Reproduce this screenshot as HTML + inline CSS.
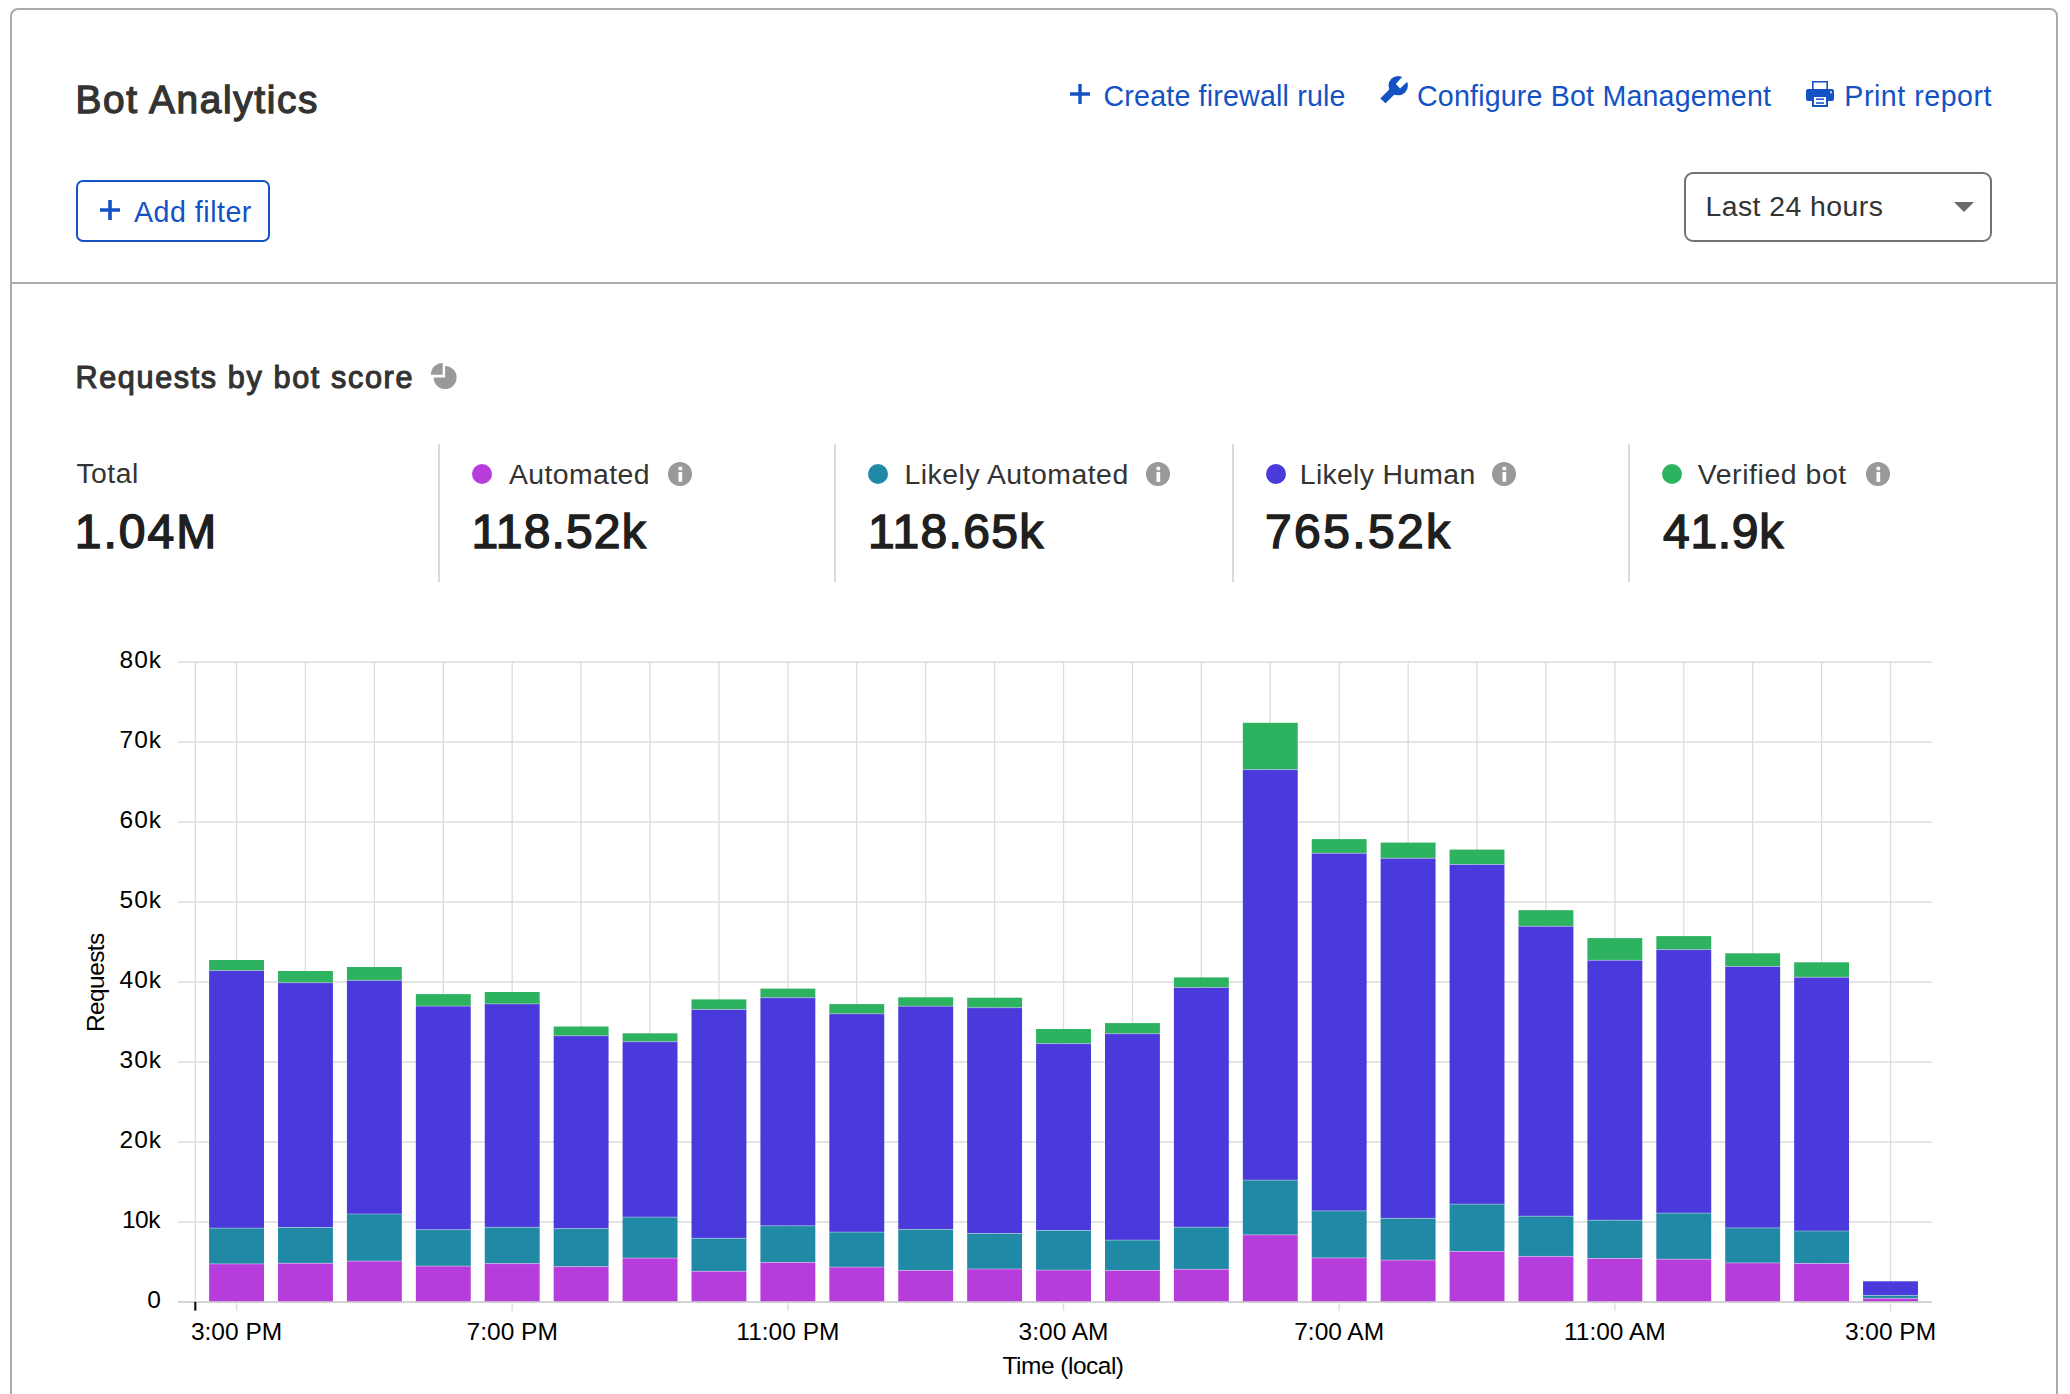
<!DOCTYPE html>
<html><head><meta charset="utf-8"><title>Bot Analytics</title>
<style>
*{box-sizing:border-box;margin:0;padding:0}
html,body{width:2070px;height:1394px;overflow:hidden;background:#fff}
body{position:relative;font-family:"Liberation Sans",sans-serif;color:#333}
.abs{position:absolute;white-space:nowrap;line-height:1}
.card{position:absolute;left:10px;top:8px;width:2048px;height:1500px;border:2px solid #aaa;border-radius:8px}
.divh{position:absolute;left:12px;top:282px;width:2044px;height:2px;background:#aaa}
.link{color:#1452c4;font-size:28.6px}
.lbl{font-size:28.4px;color:#333}
.val{font-size:48px;color:#1f1f1f;-webkit-text-stroke:1.5px #1f1f1f}
.vdiv{position:absolute;top:444px;width:2px;height:138px;background:#dadada}
.dot{position:absolute;width:20px;height:20px;border-radius:50%;top:464px}
.info{display:block}
svg text.t{font-family:"Liberation Sans",sans-serif;font-size:24.5px;fill:#000}
.g{stroke:#dcdcdc;stroke-width:1.3}
.ax{stroke:#c6c6c6;stroke-width:1.6}
</style></head><body>
<div class="card"></div>
<div class="divh"></div>

<div class="abs" style="left:75.50px;top:81.45px;font-size:38.8px;color:#333;-webkit-text-stroke:1.3px #333;letter-spacing:1.653px">Bot Analytics</div>

<svg class="abs" style="left:1068px;top:82px" width="24" height="24" viewBox="0 0 24 24"><path d="M12 2v20M2 12h20" stroke="#1452c4" stroke-width="3.4"/></svg>
<div class="abs link" style="left:1103.50px;top:81.80px;letter-spacing:0.191px">Create firewall rule</div>

<svg class="abs" style="left:1378px;top:74px" width="32" height="32" viewBox="0 0 32 32"><circle cx="20.2" cy="11.6" r="9.7" fill="#1452c4"/><path d="M2.3 24.5 L12.2 14.6 L17.4 19.4 L7.5 29.3Z" fill="#1452c4"/><path d="M17.8 9.9 L22.1 14.5 L31.3 5.8 L25.9 1.0 Z" fill="#fff"/></svg>
<div class="abs link" style="left:1417.00px;top:81.80px;letter-spacing:0.185px">Configure Bot Management</div>

<svg class="abs" style="left:1805px;top:80px" width="30" height="28" viewBox="0 0 30 28"><path fill="#1452c4" fill-rule="evenodd" d="M7 1h16v8h-1.6V2.6H8.6V9H7z M3 9h24a2 2 0 0 1 2 2v8a2 2 0 0 1-2 2h-4v6H7v-6H3a2 2 0 0 1-2-2v-8a2 2 0 0 1 2-2z M9 17v8h12v-8z M25 11.2h2v2h-2z"/><rect x="11" y="18.4" width="8" height="1.5" fill="#1452c4"/><rect x="11" y="22.3" width="8" height="1.5" fill="#1452c4"/><rect x="25" y="11.2" width="2" height="2" fill="#9ec0f0"/></svg>
<div class="abs link" style="left:1844.30px;top:82.15px;letter-spacing:0.521px">Print report</div>

<div class="abs" style="left:76px;top:180px;width:194px;height:62px;border:2px solid #1452c4;border-radius:7px"></div>
<svg class="abs" style="left:99px;top:199px" width="22" height="22" viewBox="0 0 22 22"><path d="M11 1v20M1 11h20" stroke="#1452c4" stroke-width="3.6"/></svg>
<div class="abs link" style="left:134.00px;top:197.50px;letter-spacing:0.505px">Add filter</div>

<div class="abs" style="left:1684px;top:172px;width:308px;height:70px;border:2px solid #737373;border-radius:9px"></div>
<div class="abs lbl" style="left:1705.50px;top:192.05px;letter-spacing:0.449px">Last 24 hours</div>
<svg class="abs" style="left:1953px;top:201px" width="22" height="12" viewBox="0 0 22 12"><path d="M1 1h20L11 11z" fill="#6a6a6a"/></svg>

<div class="abs" style="left:75.50px;top:361.85px;font-size:30.6px;color:#333;-webkit-text-stroke:1.1px #333;letter-spacing:1.625px">Requests by bot score</div>
<svg class="abs" style="left:430px;top:362px" width="28" height="28" viewBox="0 0 28 28"><path d="M15.1 4.0 A11.5 11.5 0 1 1 3.6 15.5 L15.1 15.5 Z" fill="#999"/><path d="M12.7 0.9 L12.7 12.7 L0.9 12.7 A11.8 11.8 0 0 1 12.7 0.9 Z" fill="#999"/></svg>

<div class="abs lbl" style="left:76.45px;top:459.05px;letter-spacing:0.455px">Total</div>
<div class="abs val" style="left:74.80px;top:507.90px;letter-spacing:2.000px">1.04M</div>

<div class="vdiv" style="left:438px"></div>
<div class="dot" style="left:472px;background:#b63ddc"></div>
<div class="abs lbl" style="left:509.00px;top:459.75px;letter-spacing:0.407px">Automated</div>
<div style="position:absolute;left:668px;top:462px"><svg class="info" width="24" height="24" viewBox="0 0 24 24"><circle cx="12" cy="12" r="12" fill="#999"/><rect x="10.5" y="4.8" width="3.7" height="3.4" rx="0.8" fill="#fff"/><rect x="10.5" y="10.1" width="3.7" height="9.7" fill="#fff"/></svg></div>
<div class="abs val" style="left:471.50px;top:507.90px;letter-spacing:1.164px">118.52k</div>

<div class="vdiv" style="left:834px"></div>
<div class="dot" style="left:868px;background:#208aa6"></div>
<div class="abs lbl" style="left:904.50px;top:460.45px;letter-spacing:0.499px">Likely Automated</div>
<div style="position:absolute;left:1146px;top:462px"><svg class="info" width="24" height="24" viewBox="0 0 24 24"><circle cx="12" cy="12" r="12" fill="#999"/><rect x="10.5" y="4.8" width="3.7" height="3.4" rx="0.8" fill="#fff"/><rect x="10.5" y="10.1" width="3.7" height="9.7" fill="#fff"/></svg></div>
<div class="abs val" style="left:868.00px;top:507.90px;letter-spacing:1.330px">118.65k</div>

<div class="vdiv" style="left:1232px"></div>
<div class="dot" style="left:1266px;background:#4b3adb"></div>
<div class="abs lbl" style="left:1299.80px;top:460.45px;letter-spacing:0.309px">Likely Human</div>
<div style="position:absolute;left:1492px;top:462px"><svg class="info" width="24" height="24" viewBox="0 0 24 24"><circle cx="12" cy="12" r="12" fill="#999"/><rect x="10.5" y="4.8" width="3.7" height="3.4" rx="0.8" fill="#fff"/><rect x="10.5" y="10.1" width="3.7" height="9.7" fill="#fff"/></svg></div>
<div class="abs val" style="left:1265.00px;top:507.90px;letter-spacing:2.370px">765.52k</div>

<div class="vdiv" style="left:1628px"></div>
<div class="dot" style="left:1662px;background:#2db35f"></div>
<div class="abs lbl" style="left:1697.80px;top:459.75px;letter-spacing:0.582px">Verified bot</div>
<div style="position:absolute;left:1866px;top:462px"><svg class="info" width="24" height="24" viewBox="0 0 24 24"><circle cx="12" cy="12" r="12" fill="#999"/><rect x="10.5" y="4.8" width="3.7" height="3.4" rx="0.8" fill="#fff"/><rect x="10.5" y="10.1" width="3.7" height="9.7" fill="#fff"/></svg></div>
<div class="abs val" style="left:1663.00px;top:507.90px;letter-spacing:0.700px">41.9k</div>

<svg class="abs" style="left:0;top:0" width="2070" height="1394" viewBox="0 0 2070 1394">
<line x1="178" y1="662" x2="1932" y2="662" class="g"/>
<line x1="178" y1="742" x2="1932" y2="742" class="g"/>
<line x1="178" y1="822" x2="1932" y2="822" class="g"/>
<line x1="178" y1="902" x2="1932" y2="902" class="g"/>
<line x1="178" y1="982" x2="1932" y2="982" class="g"/>
<line x1="178" y1="1062" x2="1932" y2="1062" class="g"/>
<line x1="178" y1="1142" x2="1932" y2="1142" class="g"/>
<line x1="178" y1="1222" x2="1932" y2="1222" class="g"/>
<line x1="195.3" y1="662" x2="195.3" y2="1302" class="g"/>
<line x1="236.55" y1="662" x2="236.55" y2="1302" class="g"/>
<line x1="305.47" y1="662" x2="305.47" y2="1302" class="g"/>
<line x1="374.38" y1="662" x2="374.38" y2="1302" class="g"/>
<line x1="443.30" y1="662" x2="443.30" y2="1302" class="g"/>
<line x1="512.21" y1="662" x2="512.21" y2="1302" class="g"/>
<line x1="581.12" y1="662" x2="581.12" y2="1302" class="g"/>
<line x1="650.04" y1="662" x2="650.04" y2="1302" class="g"/>
<line x1="718.96" y1="662" x2="718.96" y2="1302" class="g"/>
<line x1="787.87" y1="662" x2="787.87" y2="1302" class="g"/>
<line x1="856.79" y1="662" x2="856.79" y2="1302" class="g"/>
<line x1="925.70" y1="662" x2="925.70" y2="1302" class="g"/>
<line x1="994.62" y1="662" x2="994.62" y2="1302" class="g"/>
<line x1="1063.53" y1="662" x2="1063.53" y2="1302" class="g"/>
<line x1="1132.45" y1="662" x2="1132.45" y2="1302" class="g"/>
<line x1="1201.36" y1="662" x2="1201.36" y2="1302" class="g"/>
<line x1="1270.28" y1="662" x2="1270.28" y2="1302" class="g"/>
<line x1="1339.19" y1="662" x2="1339.19" y2="1302" class="g"/>
<line x1="1408.11" y1="662" x2="1408.11" y2="1302" class="g"/>
<line x1="1477.02" y1="662" x2="1477.02" y2="1302" class="g"/>
<line x1="1545.94" y1="662" x2="1545.94" y2="1302" class="g"/>
<line x1="1614.85" y1="662" x2="1614.85" y2="1302" class="g"/>
<line x1="1683.77" y1="662" x2="1683.77" y2="1302" class="g"/>
<line x1="1752.68" y1="662" x2="1752.68" y2="1302" class="g"/>
<line x1="1821.60" y1="662" x2="1821.60" y2="1302" class="g"/>
<line x1="1890.51" y1="662" x2="1890.51" y2="1302" class="g"/>
<rect x="209.10" y="960.00" width="54.9" height="10.60" fill="#2db35f"/>
<rect x="209.10" y="970.60" width="54.9" height="257.50" fill="#4b3adb"/>
<rect x="209.10" y="1228.10" width="54.9" height="35.80" fill="#208aa6"/>
<rect x="209.10" y="1263.90" width="54.9" height="37.90" fill="#b63ddc"/>
<rect x="209.10" y="970.10" width="54.9" height="1" fill="#fff" fill-opacity=".35"/>
<rect x="209.10" y="1227.60" width="54.9" height="1" fill="#fff" fill-opacity=".35"/>
<rect x="209.10" y="1263.40" width="54.9" height="1" fill="#fff" fill-opacity=".35"/>
<rect x="278.02" y="971.00" width="54.9" height="11.70" fill="#2db35f"/>
<rect x="278.02" y="982.70" width="54.9" height="244.80" fill="#4b3adb"/>
<rect x="278.02" y="1227.50" width="54.9" height="35.80" fill="#208aa6"/>
<rect x="278.02" y="1263.30" width="54.9" height="38.50" fill="#b63ddc"/>
<rect x="278.02" y="982.20" width="54.9" height="1" fill="#fff" fill-opacity=".35"/>
<rect x="278.02" y="1227.00" width="54.9" height="1" fill="#fff" fill-opacity=".35"/>
<rect x="278.02" y="1262.80" width="54.9" height="1" fill="#fff" fill-opacity=".35"/>
<rect x="346.93" y="967.00" width="54.9" height="13.40" fill="#2db35f"/>
<rect x="346.93" y="980.40" width="54.9" height="233.60" fill="#4b3adb"/>
<rect x="346.93" y="1214.00" width="54.9" height="47.10" fill="#208aa6"/>
<rect x="346.93" y="1261.10" width="54.9" height="40.70" fill="#b63ddc"/>
<rect x="346.93" y="979.90" width="54.9" height="1" fill="#fff" fill-opacity=".35"/>
<rect x="346.93" y="1213.50" width="54.9" height="1" fill="#fff" fill-opacity=".35"/>
<rect x="346.93" y="1260.60" width="54.9" height="1" fill="#fff" fill-opacity=".35"/>
<rect x="415.85" y="994.10" width="54.9" height="12.00" fill="#2db35f"/>
<rect x="415.85" y="1006.10" width="54.9" height="223.60" fill="#4b3adb"/>
<rect x="415.85" y="1229.70" width="54.9" height="36.40" fill="#208aa6"/>
<rect x="415.85" y="1266.10" width="54.9" height="35.70" fill="#b63ddc"/>
<rect x="415.85" y="1005.60" width="54.9" height="1" fill="#fff" fill-opacity=".35"/>
<rect x="415.85" y="1229.20" width="54.9" height="1" fill="#fff" fill-opacity=".35"/>
<rect x="415.85" y="1265.60" width="54.9" height="1" fill="#fff" fill-opacity=".35"/>
<rect x="484.76" y="992.00" width="54.9" height="11.90" fill="#2db35f"/>
<rect x="484.76" y="1003.90" width="54.9" height="223.40" fill="#4b3adb"/>
<rect x="484.76" y="1227.30" width="54.9" height="36.30" fill="#208aa6"/>
<rect x="484.76" y="1263.60" width="54.9" height="38.20" fill="#b63ddc"/>
<rect x="484.76" y="1003.40" width="54.9" height="1" fill="#fff" fill-opacity=".35"/>
<rect x="484.76" y="1226.80" width="54.9" height="1" fill="#fff" fill-opacity=".35"/>
<rect x="484.76" y="1263.10" width="54.9" height="1" fill="#fff" fill-opacity=".35"/>
<rect x="553.67" y="1026.50" width="54.9" height="9.30" fill="#2db35f"/>
<rect x="553.67" y="1035.80" width="54.9" height="192.80" fill="#4b3adb"/>
<rect x="553.67" y="1228.60" width="54.9" height="38.00" fill="#208aa6"/>
<rect x="553.67" y="1266.60" width="54.9" height="35.20" fill="#b63ddc"/>
<rect x="553.67" y="1035.30" width="54.9" height="1" fill="#fff" fill-opacity=".35"/>
<rect x="553.67" y="1228.10" width="54.9" height="1" fill="#fff" fill-opacity=".35"/>
<rect x="553.67" y="1266.10" width="54.9" height="1" fill="#fff" fill-opacity=".35"/>
<rect x="622.59" y="1033.30" width="54.9" height="8.40" fill="#2db35f"/>
<rect x="622.59" y="1041.70" width="54.9" height="175.40" fill="#4b3adb"/>
<rect x="622.59" y="1217.10" width="54.9" height="41.00" fill="#208aa6"/>
<rect x="622.59" y="1258.10" width="54.9" height="43.70" fill="#b63ddc"/>
<rect x="622.59" y="1041.20" width="54.9" height="1" fill="#fff" fill-opacity=".35"/>
<rect x="622.59" y="1216.60" width="54.9" height="1" fill="#fff" fill-opacity=".35"/>
<rect x="622.59" y="1257.60" width="54.9" height="1" fill="#fff" fill-opacity=".35"/>
<rect x="691.50" y="999.40" width="54.9" height="10.10" fill="#2db35f"/>
<rect x="691.50" y="1009.50" width="54.9" height="228.80" fill="#4b3adb"/>
<rect x="691.50" y="1238.30" width="54.9" height="33.00" fill="#208aa6"/>
<rect x="691.50" y="1271.30" width="54.9" height="30.50" fill="#b63ddc"/>
<rect x="691.50" y="1009.00" width="54.9" height="1" fill="#fff" fill-opacity=".35"/>
<rect x="691.50" y="1237.80" width="54.9" height="1" fill="#fff" fill-opacity=".35"/>
<rect x="691.50" y="1270.80" width="54.9" height="1" fill="#fff" fill-opacity=".35"/>
<rect x="760.42" y="988.60" width="54.9" height="9.10" fill="#2db35f"/>
<rect x="760.42" y="997.70" width="54.9" height="228.10" fill="#4b3adb"/>
<rect x="760.42" y="1225.80" width="54.9" height="36.60" fill="#208aa6"/>
<rect x="760.42" y="1262.40" width="54.9" height="39.40" fill="#b63ddc"/>
<rect x="760.42" y="997.20" width="54.9" height="1" fill="#fff" fill-opacity=".35"/>
<rect x="760.42" y="1225.30" width="54.9" height="1" fill="#fff" fill-opacity=".35"/>
<rect x="760.42" y="1261.90" width="54.9" height="1" fill="#fff" fill-opacity=".35"/>
<rect x="829.34" y="1004.10" width="54.9" height="9.70" fill="#2db35f"/>
<rect x="829.34" y="1013.80" width="54.9" height="218.30" fill="#4b3adb"/>
<rect x="829.34" y="1232.10" width="54.9" height="35.00" fill="#208aa6"/>
<rect x="829.34" y="1267.10" width="54.9" height="34.70" fill="#b63ddc"/>
<rect x="829.34" y="1013.30" width="54.9" height="1" fill="#fff" fill-opacity=".35"/>
<rect x="829.34" y="1231.60" width="54.9" height="1" fill="#fff" fill-opacity=".35"/>
<rect x="829.34" y="1266.60" width="54.9" height="1" fill="#fff" fill-opacity=".35"/>
<rect x="898.25" y="997.30" width="54.9" height="8.90" fill="#2db35f"/>
<rect x="898.25" y="1006.20" width="54.9" height="223.20" fill="#4b3adb"/>
<rect x="898.25" y="1229.40" width="54.9" height="41.00" fill="#208aa6"/>
<rect x="898.25" y="1270.40" width="54.9" height="31.40" fill="#b63ddc"/>
<rect x="898.25" y="1005.70" width="54.9" height="1" fill="#fff" fill-opacity=".35"/>
<rect x="898.25" y="1228.90" width="54.9" height="1" fill="#fff" fill-opacity=".35"/>
<rect x="898.25" y="1269.90" width="54.9" height="1" fill="#fff" fill-opacity=".35"/>
<rect x="967.16" y="997.70" width="54.9" height="10.00" fill="#2db35f"/>
<rect x="967.16" y="1007.70" width="54.9" height="225.80" fill="#4b3adb"/>
<rect x="967.16" y="1233.50" width="54.9" height="35.50" fill="#208aa6"/>
<rect x="967.16" y="1269.00" width="54.9" height="32.80" fill="#b63ddc"/>
<rect x="967.16" y="1007.20" width="54.9" height="1" fill="#fff" fill-opacity=".35"/>
<rect x="967.16" y="1233.00" width="54.9" height="1" fill="#fff" fill-opacity=".35"/>
<rect x="967.16" y="1268.50" width="54.9" height="1" fill="#fff" fill-opacity=".35"/>
<rect x="1036.08" y="1029.00" width="54.9" height="14.60" fill="#2db35f"/>
<rect x="1036.08" y="1043.60" width="54.9" height="186.90" fill="#4b3adb"/>
<rect x="1036.08" y="1230.50" width="54.9" height="39.60" fill="#208aa6"/>
<rect x="1036.08" y="1270.10" width="54.9" height="31.70" fill="#b63ddc"/>
<rect x="1036.08" y="1043.10" width="54.9" height="1" fill="#fff" fill-opacity=".35"/>
<rect x="1036.08" y="1230.00" width="54.9" height="1" fill="#fff" fill-opacity=".35"/>
<rect x="1036.08" y="1269.60" width="54.9" height="1" fill="#fff" fill-opacity=".35"/>
<rect x="1105.00" y="1023.10" width="54.9" height="10.60" fill="#2db35f"/>
<rect x="1105.00" y="1033.70" width="54.9" height="206.40" fill="#4b3adb"/>
<rect x="1105.00" y="1240.10" width="54.9" height="30.30" fill="#208aa6"/>
<rect x="1105.00" y="1270.40" width="54.9" height="31.40" fill="#b63ddc"/>
<rect x="1105.00" y="1033.20" width="54.9" height="1" fill="#fff" fill-opacity=".35"/>
<rect x="1105.00" y="1239.60" width="54.9" height="1" fill="#fff" fill-opacity=".35"/>
<rect x="1105.00" y="1269.90" width="54.9" height="1" fill="#fff" fill-opacity=".35"/>
<rect x="1173.91" y="977.40" width="54.9" height="10.10" fill="#2db35f"/>
<rect x="1173.91" y="987.50" width="54.9" height="239.70" fill="#4b3adb"/>
<rect x="1173.91" y="1227.20" width="54.9" height="42.10" fill="#208aa6"/>
<rect x="1173.91" y="1269.30" width="54.9" height="32.50" fill="#b63ddc"/>
<rect x="1173.91" y="987.00" width="54.9" height="1" fill="#fff" fill-opacity=".35"/>
<rect x="1173.91" y="1226.70" width="54.9" height="1" fill="#fff" fill-opacity=".35"/>
<rect x="1173.91" y="1268.80" width="54.9" height="1" fill="#fff" fill-opacity=".35"/>
<rect x="1242.83" y="722.80" width="54.9" height="46.80" fill="#2db35f"/>
<rect x="1242.83" y="769.60" width="54.9" height="410.50" fill="#4b3adb"/>
<rect x="1242.83" y="1180.10" width="54.9" height="54.80" fill="#208aa6"/>
<rect x="1242.83" y="1234.90" width="54.9" height="66.90" fill="#b63ddc"/>
<rect x="1242.83" y="769.10" width="54.9" height="1" fill="#fff" fill-opacity=".35"/>
<rect x="1242.83" y="1179.60" width="54.9" height="1" fill="#fff" fill-opacity=".35"/>
<rect x="1242.83" y="1234.40" width="54.9" height="1" fill="#fff" fill-opacity=".35"/>
<rect x="1311.74" y="839.10" width="54.9" height="14.20" fill="#2db35f"/>
<rect x="1311.74" y="853.30" width="54.9" height="357.60" fill="#4b3adb"/>
<rect x="1311.74" y="1210.90" width="54.9" height="47.00" fill="#208aa6"/>
<rect x="1311.74" y="1257.90" width="54.9" height="43.90" fill="#b63ddc"/>
<rect x="1311.74" y="852.80" width="54.9" height="1" fill="#fff" fill-opacity=".35"/>
<rect x="1311.74" y="1210.40" width="54.9" height="1" fill="#fff" fill-opacity=".35"/>
<rect x="1311.74" y="1257.40" width="54.9" height="1" fill="#fff" fill-opacity=".35"/>
<rect x="1380.65" y="842.60" width="54.9" height="15.70" fill="#2db35f"/>
<rect x="1380.65" y="858.30" width="54.9" height="360.00" fill="#4b3adb"/>
<rect x="1380.65" y="1218.30" width="54.9" height="41.80" fill="#208aa6"/>
<rect x="1380.65" y="1260.10" width="54.9" height="41.70" fill="#b63ddc"/>
<rect x="1380.65" y="857.80" width="54.9" height="1" fill="#fff" fill-opacity=".35"/>
<rect x="1380.65" y="1217.80" width="54.9" height="1" fill="#fff" fill-opacity=".35"/>
<rect x="1380.65" y="1259.60" width="54.9" height="1" fill="#fff" fill-opacity=".35"/>
<rect x="1449.57" y="849.60" width="54.9" height="14.90" fill="#2db35f"/>
<rect x="1449.57" y="864.50" width="54.9" height="339.60" fill="#4b3adb"/>
<rect x="1449.57" y="1204.10" width="54.9" height="47.30" fill="#208aa6"/>
<rect x="1449.57" y="1251.40" width="54.9" height="50.40" fill="#b63ddc"/>
<rect x="1449.57" y="864.00" width="54.9" height="1" fill="#fff" fill-opacity=".35"/>
<rect x="1449.57" y="1203.60" width="54.9" height="1" fill="#fff" fill-opacity=".35"/>
<rect x="1449.57" y="1250.90" width="54.9" height="1" fill="#fff" fill-opacity=".35"/>
<rect x="1518.49" y="910.20" width="54.9" height="16.10" fill="#2db35f"/>
<rect x="1518.49" y="926.30" width="54.9" height="289.90" fill="#4b3adb"/>
<rect x="1518.49" y="1216.20" width="54.9" height="40.20" fill="#208aa6"/>
<rect x="1518.49" y="1256.40" width="54.9" height="45.40" fill="#b63ddc"/>
<rect x="1518.49" y="925.80" width="54.9" height="1" fill="#fff" fill-opacity=".35"/>
<rect x="1518.49" y="1215.70" width="54.9" height="1" fill="#fff" fill-opacity=".35"/>
<rect x="1518.49" y="1255.90" width="54.9" height="1" fill="#fff" fill-opacity=".35"/>
<rect x="1587.40" y="938.10" width="54.9" height="22.20" fill="#2db35f"/>
<rect x="1587.40" y="960.30" width="54.9" height="259.90" fill="#4b3adb"/>
<rect x="1587.40" y="1220.20" width="54.9" height="38.30" fill="#208aa6"/>
<rect x="1587.40" y="1258.50" width="54.9" height="43.30" fill="#b63ddc"/>
<rect x="1587.40" y="959.80" width="54.9" height="1" fill="#fff" fill-opacity=".35"/>
<rect x="1587.40" y="1219.70" width="54.9" height="1" fill="#fff" fill-opacity=".35"/>
<rect x="1587.40" y="1258.00" width="54.9" height="1" fill="#fff" fill-opacity=".35"/>
<rect x="1656.32" y="936.10" width="54.9" height="13.50" fill="#2db35f"/>
<rect x="1656.32" y="949.60" width="54.9" height="263.50" fill="#4b3adb"/>
<rect x="1656.32" y="1213.10" width="54.9" height="46.10" fill="#208aa6"/>
<rect x="1656.32" y="1259.20" width="54.9" height="42.60" fill="#b63ddc"/>
<rect x="1656.32" y="949.10" width="54.9" height="1" fill="#fff" fill-opacity=".35"/>
<rect x="1656.32" y="1212.60" width="54.9" height="1" fill="#fff" fill-opacity=".35"/>
<rect x="1656.32" y="1258.70" width="54.9" height="1" fill="#fff" fill-opacity=".35"/>
<rect x="1725.23" y="953.30" width="54.9" height="13.20" fill="#2db35f"/>
<rect x="1725.23" y="966.50" width="54.9" height="261.40" fill="#4b3adb"/>
<rect x="1725.23" y="1227.90" width="54.9" height="35.00" fill="#208aa6"/>
<rect x="1725.23" y="1262.90" width="54.9" height="38.90" fill="#b63ddc"/>
<rect x="1725.23" y="966.00" width="54.9" height="1" fill="#fff" fill-opacity=".35"/>
<rect x="1725.23" y="1227.40" width="54.9" height="1" fill="#fff" fill-opacity=".35"/>
<rect x="1725.23" y="1262.40" width="54.9" height="1" fill="#fff" fill-opacity=".35"/>
<rect x="1794.14" y="962.30" width="54.9" height="15.00" fill="#2db35f"/>
<rect x="1794.14" y="977.30" width="54.9" height="253.70" fill="#4b3adb"/>
<rect x="1794.14" y="1231.00" width="54.9" height="32.50" fill="#208aa6"/>
<rect x="1794.14" y="1263.50" width="54.9" height="38.30" fill="#b63ddc"/>
<rect x="1794.14" y="976.80" width="54.9" height="1" fill="#fff" fill-opacity=".35"/>
<rect x="1794.14" y="1230.50" width="54.9" height="1" fill="#fff" fill-opacity=".35"/>
<rect x="1794.14" y="1263.00" width="54.9" height="1" fill="#fff" fill-opacity=".35"/>
<rect x="1863.06" y="1281.30" width="54.9" height="14.10" fill="#4b3adb"/>
<rect x="1863.06" y="1295.40" width="54.9" height="3.00" fill="#208aa6"/>
<rect x="1863.06" y="1298.40" width="54.9" height="3.40" fill="#b63ddc"/>
<rect x="1863.06" y="1294.90" width="54.9" height="1" fill="#fff" fill-opacity=".35"/>
<rect x="1863.06" y="1297.90" width="54.9" height="1" fill="#fff" fill-opacity=".35"/>
<line x1="178" y1="1302" x2="1932" y2="1302" class="ax"/>
<line x1="195.3" y1="1302" x2="195.3" y2="1310.6" stroke="#111" stroke-width="2.2"/>
<line x1="236.55" y1="1302" x2="236.55" y2="1311" class="g"/>
<text x="236.55" y="1340" text-anchor="middle" class="t">3:00 PM</text>
<line x1="512.21" y1="1302" x2="512.21" y2="1311" class="g"/>
<text x="512.21" y="1340" text-anchor="middle" class="t">7:00 PM</text>
<line x1="787.87" y1="1302" x2="787.87" y2="1311" class="g"/>
<text x="787.87" y="1340" text-anchor="middle" class="t">11:00 PM</text>
<line x1="1063.53" y1="1302" x2="1063.53" y2="1311" class="g"/>
<text x="1063.53" y="1340" text-anchor="middle" class="t">3:00 AM</text>
<line x1="1339.19" y1="1302" x2="1339.19" y2="1311" class="g"/>
<text x="1339.19" y="1340" text-anchor="middle" class="t">7:00 AM</text>
<line x1="1614.85" y1="1302" x2="1614.85" y2="1311" class="g"/>
<text x="1614.85" y="1340" text-anchor="middle" class="t">11:00 AM</text>
<line x1="1890.51" y1="1302" x2="1890.51" y2="1311" class="g"/>
<text x="1890.51" y="1340" text-anchor="middle" class="t">3:00 PM</text>
<text x="162.1" y="668" text-anchor="end" class="t" letter-spacing="1">80k</text>
<text x="162.1" y="748" text-anchor="end" class="t" letter-spacing="1">70k</text>
<text x="162.1" y="828" text-anchor="end" class="t" letter-spacing="1">60k</text>
<text x="162.1" y="908" text-anchor="end" class="t" letter-spacing="1">50k</text>
<text x="162.1" y="988" text-anchor="end" class="t" letter-spacing="1">40k</text>
<text x="162.1" y="1068" text-anchor="end" class="t" letter-spacing="1">30k</text>
<text x="162.1" y="1148" text-anchor="end" class="t" letter-spacing="1">20k</text>
<text x="159.8" y="1228" text-anchor="end" class="t" letter-spacing="-0.6">10k</text>
<text x="160.8" y="1308" text-anchor="end" class="t" letter-spacing="0">0</text>
<text transform="translate(104,982.7) rotate(-90)" text-anchor="middle" class="t" letter-spacing="-0.6">Requests</text>
<text x="1063" y="1374" text-anchor="middle" class="t" letter-spacing="-0.5">Time (local)</text>
</svg>
</body></html>
